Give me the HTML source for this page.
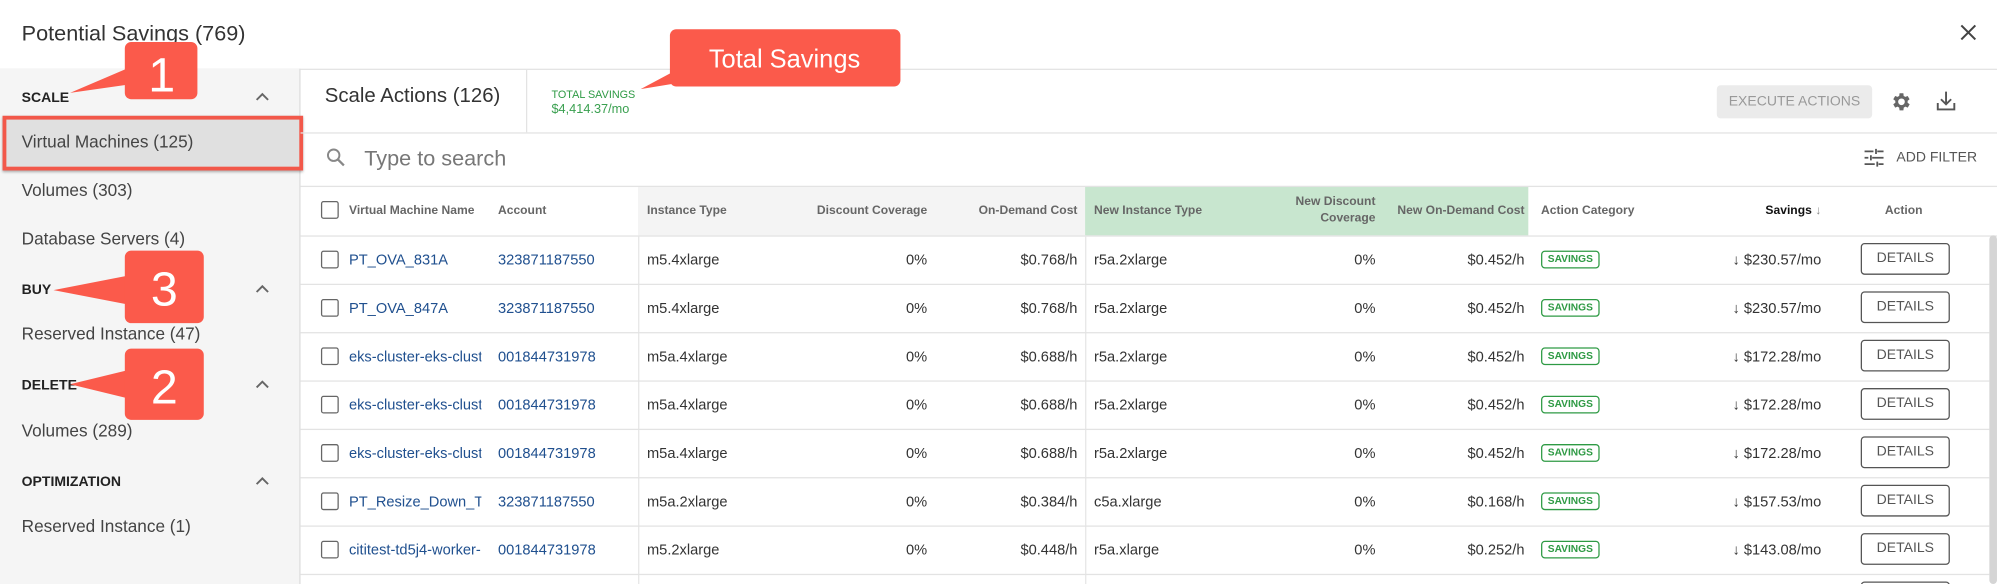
<!DOCTYPE html>
<html><head><meta charset="utf-8"><style>
*{box-sizing:border-box;margin:0;padding:0}
html,body{width:1997px;height:584px;overflow:hidden;background:#fff;position:relative}
#w{position:absolute;left:0;top:0;width:1568px;height:459px;overflow:hidden;transform:scale(1.27359,1.27233);transform-origin:0 0;font-family:"Liberation Sans",Arial,sans-serif;color:#333}
.a{position:absolute;white-space:nowrap}
.sb{position:absolute;left:0;top:54px;width:236px;height:405px;background:#f5f5f5;border-right:1px solid #ddd}
.sec{position:absolute;left:17px;font-size:11px;font-weight:bold;color:#222;white-space:nowrap}
.itm{position:absolute;left:17px;font-size:13.5px;color:#444;white-space:nowrap}
.chev{position:absolute;left:200px;width:12px;height:8px}
.hl{position:absolute;left:0;height:1px;background:#e3e3e3}
.th{position:absolute;font-size:9.5px;font-weight:bold;color:#666;line-height:13px;white-space:nowrap}
.td{position:absolute;font-size:11.5px;color:#333;white-space:nowrap;overflow:hidden}
.lk{color:#20508f}
.cb{position:absolute;left:252px;width:14px;height:14px;border:1.5px solid #666;border-radius:2px}
.bad{position:absolute;left:1210px;width:46px;height:14px;border:1px solid #2e9a44;border-radius:3px;color:#2e9a44;font-size:8px;font-weight:bold;text-align:center;line-height:12px}
.det{position:absolute;left:1461px;width:70px;height:25px;border:1px solid #555;border-radius:3px;font-size:11px;color:#555;text-align:center;line-height:23px}
.r{text-align:right}
</style></head><body><div id="w">
<div class="a" style="left:17px;top:17px;font-size:17px;color:#333">Potential Savings (769)</div>
<svg class="a" style="left:1539px;top:19px" width="13" height="13" viewBox="0 0 13 13"><path d="M1 1L12 12M12 1L1 12" stroke="#444" stroke-width="1.6"/></svg>
<div class="hl" style="top:54px;width:1568px"></div>

<div class="sb"></div>
<div class="sec" style="top:71px">SCALE</div>
<div style="position:absolute;left:2px;top:91px;width:236px;height:43px;border:3px solid #f2584a;background:#e0e0e0;box-shadow:0 1px 2px rgba(0,0,0,.3)"></div>
<div class="itm" style="top:104px">Virtual Machines (125)</div>
<div class="itm" style="top:142px">Volumes (303)</div>
<div class="itm" style="top:180px">Database Servers (4)</div>
<div class="sec" style="top:222px">BUY</div>
<div class="itm" style="top:255px">Reserved Instance (47)</div>
<div class="sec" style="top:297px">DELETE</div>
<div class="itm" style="top:331px">Volumes (289)</div>
<div class="sec" style="top:373px">OPTIMIZATION</div>
<div class="itm" style="top:406px">Reserved Instance (1)</div>
<svg class="chev" style="top:72px" viewBox="0 0 12 8"><path d="M1.5 6.5L6 2L10.5 6.5" fill="none" stroke="#666" stroke-width="1.5"/></svg>
<svg class="chev" style="top:223px" viewBox="0 0 12 8"><path d="M1.5 6.5L6 2L10.5 6.5" fill="none" stroke="#666" stroke-width="1.5"/></svg>
<svg class="chev" style="top:298px" viewBox="0 0 12 8"><path d="M1.5 6.5L6 2L10.5 6.5" fill="none" stroke="#666" stroke-width="1.5"/></svg>
<svg class="chev" style="top:374px" viewBox="0 0 12 8"><path d="M1.5 6.5L6 2L10.5 6.5" fill="none" stroke="#666" stroke-width="1.5"/></svg>

<div class="a" style="left:255px;top:67px;font-size:16px;color:#333">Scale Actions (126)</div>
<div class="a" style="left:413px;top:55px;width:1px;height:49px;background:#e3e3e3"></div>
<div class="a" style="left:433px;top:69px;font-size:8.5px;color:#2e9a44">TOTAL SAVINGS</div>
<div class="a" style="left:433px;top:81px;font-size:10px;color:#3aa050">$4,414.37/mo</div>
<div class="a" style="left:1348px;top:67px;width:122px;height:26px;background:#ebebeb;border-radius:3px;font-size:11px;color:#999;text-align:center;line-height:26px">EXECUTE ACTIONS</div>
<svg class="a" style="left:1484px;top:71px" width="18" height="18" viewBox="0 0 24 24"><path fill="#666" d="M19.4 13a7.5 7.5 0 0 0 0-2l2.1-1.6-2-3.5-2.5 1a7 7 0 0 0-1.7-1L15 3h-4l-.4 2.9a7 7 0 0 0-1.7 1l-2.5-1-2 3.5L6.6 11a7.5 7.5 0 0 0 0 2l-2.2 1.6 2 3.5 2.5-1a7 7 0 0 0 1.7 1L11 21h4l.4-2.9a7 7 0 0 0 1.7-1l2.5 1 2-3.5zM13 15.5a3.5 3.5 0 1 1 0-7 3.5 3.5 0 0 1 0 7z" transform="translate(-1 0)"/></svg>
<svg class="a" style="left:1520px;top:71px" width="16" height="17" viewBox="0 0 16 17"><path d="M8 1v10M4 7l4 4 4-4M1.5 10v5h13v-5" fill="none" stroke="#555" stroke-width="1.5"/></svg>
<div class="hl" style="top:104px;left:236px;width:1332px"></div>

<svg class="a" style="left:256px;top:116px" width="15" height="15" viewBox="0 0 15 15"><circle cx="6" cy="6" r="4.5" fill="none" stroke="#888" stroke-width="1.5"/><path d="M9.5 9.5L14 14" stroke="#888" stroke-width="1.8"/></svg>
<div class="a" style="left:286px;top:115px;font-size:17px;color:#777">Type to search</div>
<svg class="a" style="left:1464px;top:116px" width="15" height="16" viewBox="0 0 15 16"><path d="M0 3h7M10 3h5M9 1v4M0 8h3M6 8h9M5 6v4M0 13h8M11 13h4M10 11v4" stroke="#555" stroke-width="1.4"/></svg>
<div class="a" style="left:1489px;top:118px;font-size:11px;color:#555">ADD FILTER</div>
<div class="hl" style="top:146px;left:236px;width:1332px"></div>

<div class="a" style="left:501px;top:147px;width:351px;height:38px;background:#f4f4f4"></div>
<div class="a" style="left:852px;top:147px;width:348px;height:38px;background:#c8e6cf"></div>
<div class="cb" style="top:158px"></div>
<div class="th" style="left:274px;top:159px">Virtual Machine Name</div>
<div class="th" style="left:391px;top:159px">Account</div>
<div class="th" style="left:508px;top:159px">Instance Type</div>
<div class="th r" style="left:600px;width:128px;top:159px">Discount Coverage</div>
<div class="th r" style="left:740px;width:106px;top:159px">On-Demand Cost</div>
<div class="th" style="left:859px;top:159px">New Instance Type</div>
<div class="th r" style="left:990px;width:90px;top:152px">New Discount<br>Coverage</div>
<div class="th r" style="left:1090px;width:107px;top:159px">New On-Demand Cost</div>
<div class="th" style="left:1210px;top:159px">Action Category</div>
<div class="th r" style="left:1330px;width:100px;top:159px;color:#111">Savings <span style="font-weight:normal;color:#888">↓</span></div>
<div class="th" style="left:1480px;top:159px">Action</div>
<div class="hl" style="top:185px;left:236px;width:1332px"></div>
<div class="a" style="left:501px;top:185px;width:1px;height:274px;background:#e6e6e6"></div>
<div class="a" style="left:852px;top:185px;width:1px;height:274px;background:#e6e6e6"></div>
<div class="a" style="left:1562px;top:185px;width:6px;height:274px;background:#d5d5d5;border-radius:3px"></div>

<div id="rows"></div>

<svg class="a" style="left:0;top:0" width="1568" height="459">
<g fill="#fb5a4b">
<path d="M55 73L104 52L104 66Z"/><rect x="98" y="33" width="57" height="45" rx="5"/>
<path d="M42 228L104 216L104 240Z"/><rect x="98" y="197" width="62" height="57" rx="5"/>
<path d="M55 302L104 290L104 314Z"/><rect x="98" y="274" width="62" height="56" rx="5"/>
<path d="M503 70L535 53L540 64Z"/><rect x="526" y="23" width="181" height="45" rx="5"/>
</g>
<g fill="#fff" font-family="Liberation Sans,Arial,sans-serif">
<text x="127" y="72" font-size="38" text-anchor="middle">1</text>
<text x="129" y="240" font-size="38" text-anchor="middle">3</text>
<text x="129" y="317" font-size="38" text-anchor="middle">2</text>
<text x="616" y="53" font-size="20" text-anchor="middle">Total Savings</text>
</g></svg>
</div>
<script>
var d=[["PT_OVA_831A","323871187550","m5.4xlarge","$0.768/h","r5a.2xlarge","$0.452/h","$230.57/mo"],
["PT_OVA_847A","323871187550","m5.4xlarge","$0.768/h","r5a.2xlarge","$0.452/h","$230.57/mo"],
["eks-cluster-eks-clust","001844731978","m5a.4xlarge","$0.688/h","r5a.2xlarge","$0.452/h","$172.28/mo"],
["eks-cluster-eks-clust","001844731978","m5a.4xlarge","$0.688/h","r5a.2xlarge","$0.452/h","$172.28/mo"],
["eks-cluster-eks-clust","001844731978","m5a.4xlarge","$0.688/h","r5a.2xlarge","$0.452/h","$172.28/mo"],
["PT_Resize_Down_Ta","323871187550","m5a.2xlarge","$0.384/h","c5a.xlarge","$0.168/h","$157.53/mo"],
["cititest-td5j4-worker-","001844731978","m5.2xlarge","$0.448/h","r5a.xlarge","$0.252/h","$143.08/mo"]];
var h="";
d.forEach(function(r,i){var y=185+i*38,t=y+14;
h+='<div class="cb" style="top:'+(y+12)+'px"></div>'+
'<div class="td lk" style="left:274px;top:'+t+'px;width:104px">'+r[0]+'</div>'+
'<div class="td lk" style="left:391px;top:'+t+'px">'+r[1]+'</div>'+
'<div class="td" style="left:508px;top:'+t+'px">'+r[2]+'</div>'+
'<div class="td r" style="left:600px;width:128px;top:'+t+'px">0%</div>'+
'<div class="td r" style="left:740px;width:106px;top:'+t+'px">'+r[3]+'</div>'+
'<div class="td" style="left:859px;top:'+t+'px">'+r[4]+'</div>'+
'<div class="td r" style="left:990px;width:90px;top:'+t+'px">0%</div>'+
'<div class="td r" style="left:1090px;width:107px;top:'+t+'px">'+r[5]+'</div>'+
'<div class="bad" style="top:'+(y+12)+'px">SAVINGS</div>'+
'<div class="td r" style="left:1330px;width:100px;top:'+t+'px">↓ '+r[6]+'</div>'+
'<div class="det" style="top:'+(y+6)+'px">DETAILS</div>'+
'<div class="hl" style="top:'+(y+38)+'px;left:236px;width:1326px"></div>';});
h+='<div class="det" style="top:457px">DETAILS</div>';
document.getElementById("rows").outerHTML=h;
</script>
</body></html>
